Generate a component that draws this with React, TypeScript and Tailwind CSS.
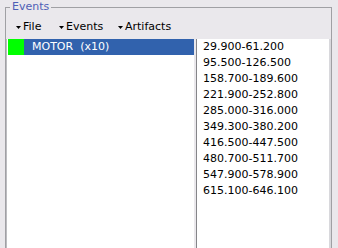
const intervals = [
  '29.900-61.200',
  '95.500-126.500',
  '158.700-189.600',
  '221.900-252.800',
  '285.000-316.000',
  '349.300-380.200',
  '416.500-447.500',
  '480.700-511.700',
  '547.900-578.900',
  '615.100-646.100',
]

const menus = [
  { label: 'File', width: 'w-[43px]' },
  { label: 'Events', width: 'w-[59px]' },
  { label: 'Artifacts', width: 'w-[70px]' },
]

function Caret() {
  return (
    <svg width="5" height="3" viewBox="0 0 5 3" className="mr-[2px] shrink-0">
      <polygon points="0,0 5,0 2.5,3" fill="#000" />
    </svg>
  )
}

export default function App() {
  return (
    <div
      className="h-[248px] w-[338px] overflow-hidden bg-[#eae8ec] text-[11px] leading-[16px] text-black"
      style={{ fontFamily: '"DejaVu Sans", Verdana, sans-serif' }}
    >
      <div className="relative ml-[5px] mt-[7px] h-[260px] w-[327px] border border-[#a0a0a4]">
        <span className="absolute -top-[9px] left-[4px] bg-[#eae8ec] px-[2px] text-[#4e5fb6]">Events</span>

        <div className="mt-[11px] flex pl-[10px]">
          {menus.map((m) => (
            <div key={m.label} className={`flex items-center ${m.width}`}>
              <Caret />
              <span>{m.label}</span>
            </div>
          ))}
        </div>

        <div className="mt-[4px] flex h-[220px]">
          <div className="w-[188px] border-l border-[#bcbcc0] bg-white pl-px">
            <div className="flex h-[16px] bg-[#3162ad] text-white">
              <div className="w-[16px] bg-[#00ff00]" />
              <span className="whitespace-pre pl-[8px]">MOTOR  (x10)</span>
            </div>
          </div>
          <div className="ml-[2px] flex-1 border-l border-r-2 border-l-[#858589] border-r-[#d8d8dc] bg-white pl-[6px]">
            {intervals.map((t) => (
              <div key={t} className="h-[16px]">
                {t}
              </div>
            ))}
          </div>
        </div>
      </div>
    </div>
  )
}
